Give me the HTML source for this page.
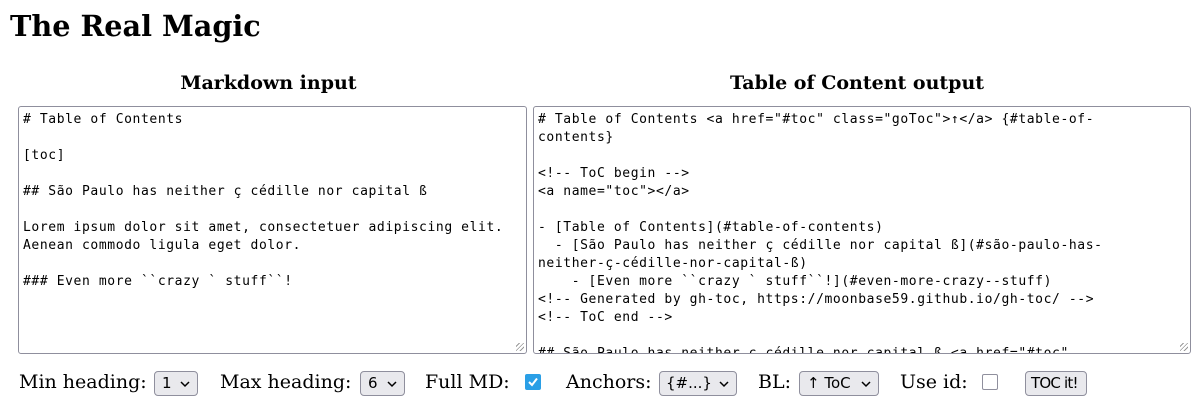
<!DOCTYPE html>
<html><head><meta charset="utf-8"><style>
html,body{margin:0;padding:0;background:#fff;width:1200px;height:413px;overflow:hidden;font-family:"DejaVu Serif","Liberation Serif",serif;color:#000}
h1{position:absolute;left:10px;top:6px;margin:0;font-size:28.7px;font-weight:bold;line-height:40px}
h2{position:absolute;top:70px;margin:0;font-size:19px;font-weight:bold;line-height:26px;text-align:center}
.ta{position:absolute;top:106px;border:1px solid #8f8f9d;border-radius:3px;background:#fff;overflow:hidden;box-sizing:border-box;height:248px}
.ta pre{margin:0;padding:4px 0 0 4px;font-family:"DejaVu Sans Mono","Liberation Mono",monospace;font-size:13px;line-height:18px;white-space:pre;letter-spacing:0.6px}
.grip{position:absolute;right:2px;bottom:2px;width:8px;height:8px;background:repeating-linear-gradient(135deg,transparent 0 2px,#999 2px 3px)}
.lbl{position:absolute;top:369px;font-size:19px;line-height:26px}
.sel{position:absolute;top:371px;height:25px;box-sizing:border-box;border:1px solid #8f8f9d;border-radius:4px;background:#e9e9ed;font-family:"DejaVu Sans","Liberation Sans",sans-serif;font-size:15px;line-height:23px;padding-left:7px}
.sel svg{position:absolute;right:7px;top:9px}
.cb{position:absolute;top:374px;width:16px;height:16px;box-sizing:border-box;border-radius:2px}
</style></head><body>
<h1>The Real Magic</h1>
<h2 style="left:14px;width:509px">Markdown input</h2>
<h2 style="left:528px;width:658px">Table of Content output</h2>
<div class="ta" style="left:18px;width:509px"><pre># Table of Contents

[toc]

## São Paulo has neither ç cédille nor capital ß

Lorem ipsum dolor sit amet, consectetuer adipiscing elit.
Aenean commodo ligula eget dolor.

### Even more ``crazy ` stuff``!</pre><div class="grip"></div></div>
<div class="ta" style="left:533px;width:658px"><pre># Table of Contents &lt;a href="#toc" class="goToc"&gt;↑&lt;/a&gt; {#table-of-
contents}

&lt;!-- ToC begin --&gt;
&lt;a name="toc"&gt;&lt;/a&gt;

- [Table of Contents](#table-of-contents)
  - [São Paulo has neither ç cédille nor capital ß](#são-paulo-has-
neither-ç-cédille-nor-capital-ß)
    - [Even more ``crazy ` stuff``!](#even-more-crazy--stuff)
&lt;!-- Generated by gh-toc, https://moonbase59.github.io/gh-toc/ --&gt;
&lt;!-- ToC end --&gt;

## São Paulo has neither ç cédille nor capital ß &lt;a href="#toc"</pre><div class="grip"></div></div>

<div class="lbl" style="left:19px">Min heading:</div>
<div class="sel" style="left:154px;width:44px">1<svg width="10" height="7"><path d="M1 1L5 5L9 1" stroke="#000" stroke-width="1.5" fill="none"/></svg></div>
<div class="lbl" style="left:220px">Max heading:</div>
<div class="sel" style="left:360px;width:45px">6<svg width="10" height="7"><path d="M1 1L5 5L9 1" stroke="#000" stroke-width="1.5" fill="none"/></svg></div>
<div class="lbl" style="left:425px">Full MD:</div>
<div class="cb" style="left:525px;background:#2a9fe6"><svg width="16" height="16" style="position:absolute;left:0;top:0"><path d="M4 8L7 11L12 4.5" stroke="#fff" stroke-width="2" fill="none"/></svg></div>
<div class="lbl" style="left:566px">Anchors:</div>
<div class="sel" style="left:659px;width:78px;padding-left:6px">{#...}<svg width="10" height="7"><path d="M1 1L5 5L9 1" stroke="#000" stroke-width="1.5" fill="none"/></svg></div>
<div class="lbl" style="left:758px">BL:</div>
<div class="sel" style="left:799px;width:80px">↑ ToC<svg width="10" height="7"><path d="M1 1L5 5L9 1" stroke="#000" stroke-width="1.5" fill="none"/></svg></div>
<div class="lbl" style="left:900px">Use id:</div>
<div class="cb" style="left:982px;border:1.5px solid #8f8f9d;background:#fff"></div>
<div class="sel" style="left:1025px;width:62px;padding-left:5px;letter-spacing:-0.8px">TOC it!</div>
</body></html>
